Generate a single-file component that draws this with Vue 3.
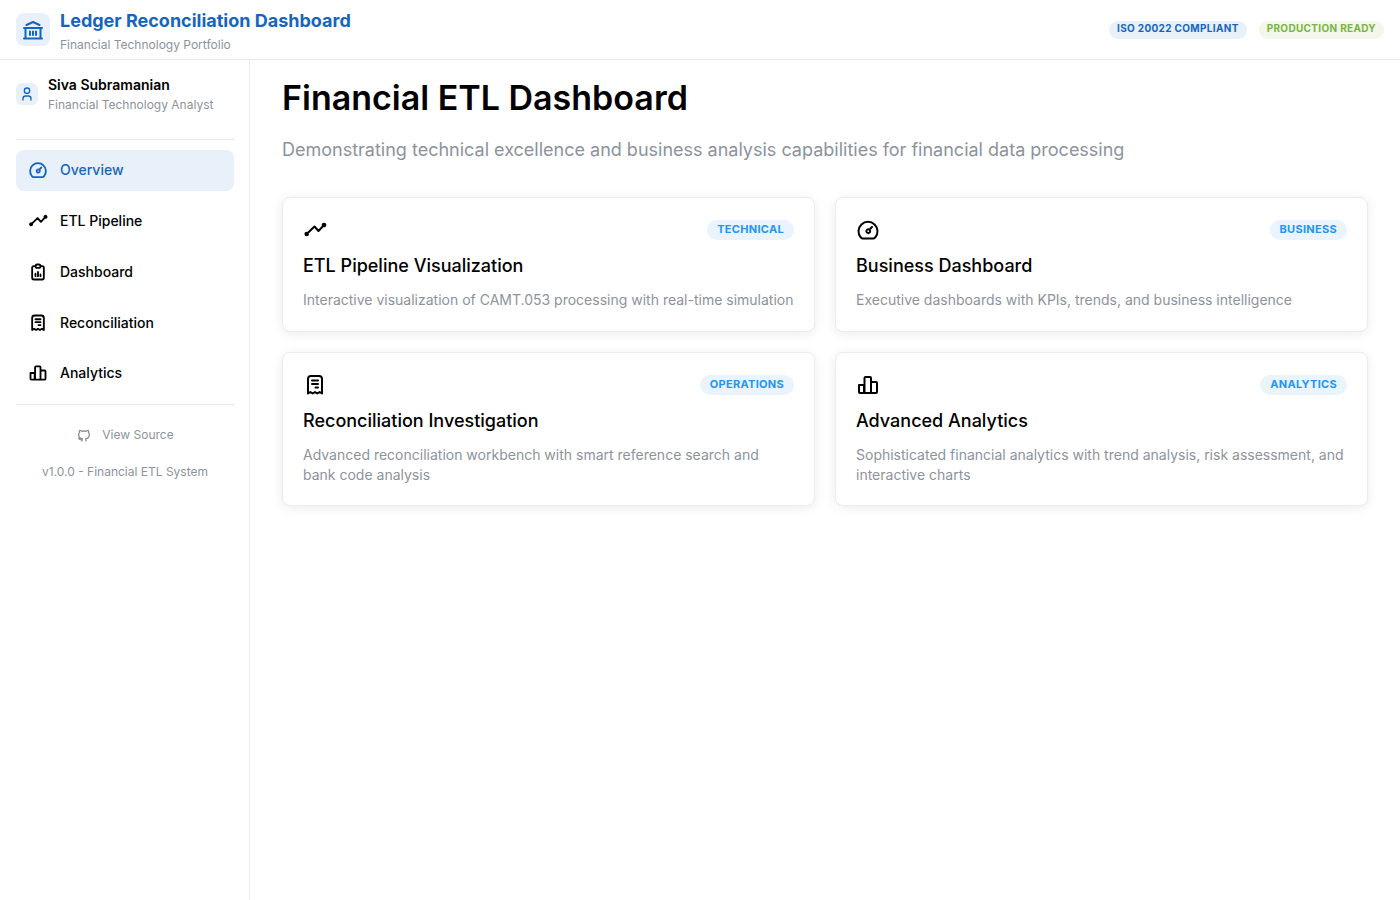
<template>
  <div class="app">
    <header class="topbar">
      <div class="brand">
        <div class="brand-icon">
          <svg width="24" height="24" viewBox="0 0 24 24" fill="none" stroke="currentColor" stroke-width="2" stroke-linecap="round" stroke-linejoin="round">
            <path d="M3 20.500h18M3 10h18M5.500 7l6.500-3 6.500 3M4.500 10v10.500M19.500 10v10.500M9 13.500v3.500M12 13.500v3.500M15 13.500v3.500" />
          </svg>
        </div>
        <div class="brand-text">
          <div class="brand-title">Ledger Reconciliation Dashboard</div>
          <div class="brand-sub">Financial Technology Portfolio</div>
        </div>
      </div>
      <div class="badges">
        <span class="pill pill-blue">ISO 20022 COMPLIANT</span>
        <span class="pill pill-green">PRODUCTION READY</span>
      </div>
    </header>

    <div class="body">
      <aside class="sidebar">
        <div class="profile">
          <div class="avatar">
            <svg width="16" height="16" viewBox="0 0 24 24" fill="none" stroke="currentColor" stroke-width="2" stroke-linecap="round" stroke-linejoin="round">
              <path d="M8 7a4 4 0 1 0 8 0a4 4 0 1 0-8 0M6 21v-2a4 4 0 0 1 4-4h4a4 4 0 0 1 4 4v2" />
            </svg>
          </div>
          <div>
            <div class="profile-name">Siva Subramanian</div>
            <div class="profile-role">Financial Technology Analyst</div>
          </div>
        </div>

        <nav class="nav">
          <a v-for="item in navItems" :key="item.label" class="nav-item" :class="{ active: item.active }">
            <svg class="nav-icon" width="20" height="20" viewBox="0 0 24 24" fill="none" stroke="currentColor" stroke-width="2.200" stroke-linecap="round" stroke-linejoin="round">
              <path :d="icons[item.icon]" />
            </svg>
            <span class="nav-label">{{ item.label }}</span>
          </a>
        </nav>

        <div class="side-foot">
          <a class="source">
            <svg width="16" height="16" viewBox="0 0 24 24" fill="none" stroke="currentColor" stroke-width="2" stroke-linecap="round" stroke-linejoin="round">
              <path d="M9 21c-.1-1 0-2 .5-3.500-2.800-.3-5.500-1.400-5.500-6a4.600 4.600 0 0 1 1.300-3.200 4.200 4.200 0 0 1 .1-3.200s1.100-.3 3.500 1.300a12.300 12.300 0 0 1 6.200 0c2.400-1.600 3.500-1.300 3.500-1.300a4.200 4.200 0 0 1 .1 3.200 4.600 4.600 0 0 1 1.300 3.200c0 4.600-2.700 5.700-5.500 6 .5 1.500.6 2.500.5 3.500M9 19c-3 .9-4-.5-5-2" />
            </svg>
            <span>View Source</span>
          </a>
          <div class="version">v1.0.0 - Financial ETL System</div>
        </div>
      </aside>

      <main class="main">
        <h1>Financial ETL Dashboard</h1>
        <p class="lead">Demonstrating technical excellence and business analysis capabilities for financial data processing</p>
        <div class="cards">
          <div v-for="card in cards" :key="card.title" class="card">
            <div class="card-top">
              <svg width="24" height="24" viewBox="0 0 24 24" fill="none" stroke="currentColor" stroke-width="2" stroke-linecap="round" stroke-linejoin="round">
                <path :d="icons[card.icon]" />
              </svg>
              <span class="tag">{{ card.tag }}</span>
            </div>
            <h2>{{ card.title }}</h2>
            <p>{{ card.text }}</p>
          </div>
        </div>
      </main>
    </div>
  </div>
</template>

<script setup>
const icons = {
  gauge: 'M6.500 20.500h11a2 2 0 0 0 1.700-1A9.500 9.500 0 1 0 4.800 19.500a2 2 0 0 0 1.700 1M10.700 14.300a1.900 1.900 0 1 0 2.700-2.600 1.900 1.900 0 0 0-2.700 2.600M13.500 11.500l2.500-2.500',
  line: 'M3.700 16L11.500 8.500l4 4.500L21 7M2.400 16a1.300 1.300 0 1 0 2.600 0a1.300 1.300 0 1 0-2.600 0M19.700 7a1.300 1.300 0 1 0 2.600 0a1.300 1.300 0 1 0-2.600 0',
  clip: 'M9 5H7a2 2 0 0 0-2 2v12a2 2 0 0 0 2 2h10a2 2 0 0 0 2-2V7a2 2 0 0 0-2-2h-2M9 5a2 2 0 0 1 2-2h2a2 2 0 0 1 2 2v0a2 2 0 0 1-2 2h-2a2 2 0 0 1-2-2M9 17v-3M12 17v-5M15 17v-2',
  receipt: 'M5 20.500V6a3 3 0 0 1 3-3h8a3 3 0 0 1 3 3v14.500l-2.330-1.500-2.330 1.500-2.340-1.500-2.340 1.500-2.330-1.500zM9 7.500h6M9 11h6M12.500 14.500H15',
  bars: 'M3 12h5v8H4a1 1 0 0 1-1-1zM8.500 20V5a1 1 0 0 1 1-1h4.500a1 1 0 0 1 1 1v15zM15 9h5a1 1 0 0 1 1 1v9a1 1 0 0 1-1 1h-5'
}

const navItems = [
  { label: 'Overview', icon: 'gauge', active: true },
  { label: 'ETL Pipeline', icon: 'line' },
  { label: 'Dashboard', icon: 'clip' },
  { label: 'Reconciliation', icon: 'receipt' },
  { label: 'Analytics', icon: 'bars' }
]

const cards = [
  {
    icon: 'line',
    tag: 'TECHNICAL',
    title: 'ETL Pipeline Visualization',
    text: 'Interactive visualization of CAMT.053 processing with real-time simulation'
  },
  {
    icon: 'gauge',
    tag: 'BUSINESS',
    title: 'Business Dashboard',
    text: 'Executive dashboards with KPIs, trends, and business intelligence'
  },
  {
    icon: 'receipt',
    tag: 'OPERATIONS',
    title: 'Reconciliation Investigation',
    text: 'Advanced reconciliation workbench with smart reference search and bank code analysis'
  },
  {
    icon: 'bars',
    tag: 'ANALYTICS',
    title: 'Advanced Analytics',
    text: 'Sophisticated financial analytics with trend analysis, risk assessment, and interactive charts'
  }
]
</script>

<style scoped>
.app {
  min-height: 900px;
  background: #fff;
  color: #000;
  font-family: Inter, "Liberation Sans", sans-serif;
}

.topbar {
  height: 60px;
  box-sizing: border-box;
  border-bottom: 1px solid #e5e7eb;
  padding: 0 16px;
  display: flex;
  align-items: center;
  justify-content: space-between;
}

.brand {
  display: flex;
  align-items: center;
  gap: 10px;
}

.brand-text {
  padding-top: 4px;
}

.brand-icon {
  width: 34px;
  height: 33px;
  border-radius: 8px;
  background: #e8f0f9;
  color: #1565c0;
  display: flex;
  align-items: center;
  justify-content: center;
}

.brand-title {
  font-size: 18px;
  font-weight: 700;
  line-height: 22px;
  color: #1565c0;
}

.brand-sub {
  margin-top: 5px;
  font-size: 12px;
  line-height: 16px;
  color: #8c939d;
}

.badges {
  display: flex;
  gap: 12px;
}

.pill {
  height: 18px;
  padding: 0 8px;
  border-radius: 9px;
  font-size: 10px;
  font-weight: 700;
  line-height: 15px;
  letter-spacing: 0.33px;
}

.pill-blue {
  background: #e8f0f9;
  color: #1565c0;
}

.pill-green {
  background: #f2f7ec;
  color: #7cb342;
}

.body {
  display: flex;
  height: 840px;
}

.sidebar {
  width: 250px;
  box-sizing: border-box;
  border-right: 1px solid #eceef1;
  padding: 0 15px 0 16px;
}

.profile {
  height: 80px;
  box-sizing: border-box;
  border-bottom: 1px solid #e5e7eb;
  display: flex;
  align-items: center;
  gap: 10px;
  padding-bottom: 10px;
}

.avatar {
  width: 22px;
  height: 22px;
  margin-top: -1px;
  border-radius: 6px;
  background: #e8f0f9;
  color: #1565c0;
  display: flex;
  align-items: center;
  justify-content: center;
}

.profile-name {
  font-size: 14px;
  font-weight: 600;
  line-height: 20px;
}

.profile-role {
  font-size: 12px;
  line-height: 20px;
  color: #8c939d;
}

.nav {
  margin-top: 10px;
  padding-bottom: 10.25px;
  border-bottom: 1px solid #e5e7eb;
  display: flex;
  flex-direction: column;
  gap: 10.25px;
}

.nav-item {
  height: 40.5px;
  padding: 0 12px;
  border-radius: 8px;
  display: flex;
  align-items: center;
  gap: 12px;
  font-size: 14px;
  font-weight: 500;
}

.nav-label {
  margin-top: -1px;
}

.nav-item.active {
  background: #e8f0f9;
  color: #1565c0;
}

.side-foot {
  padding-top: 22px;
  text-align: center;
  font-size: 12px;
  color: #8c939d;
}

.source {
  display: flex;
  justify-content: center;
  align-items: center;
  gap: 10px;
  line-height: 16px;
}

.version {
  margin-top: 21px;
  line-height: 16px;
}

.main {
  flex: 1;
  padding: 18px 32px 0;
}

h1 {
  margin: 0;
  font-size: 34px;
  font-weight: 600;
  line-height: 40px;
}

.lead {
  margin: 18px 0 0;
  font-size: 18px;
  line-height: 28px;
  color: #8c939d;
}

.cards {
  margin-top: 33px;
  display: grid;
  grid-template-columns: 1fr 1fr;
  gap: 20px;
}

.card {
  box-sizing: border-box;
  padding: 20px 20px 20.5px;
  border: 1px solid #eaecef;
  border-radius: 8px;
  box-shadow: 0 2px 12px rgba(0, 0, 0, 0.08);
  background: #fff;
}

.card-top {
  display: flex;
  align-items: center;
  justify-content: space-between;
  height: 24px;
}

.tag {
  height: 20px;
  padding: 0 10px;
  border-radius: 10px;
  background: #e9f4fe;
  color: #2196f3;
  font-size: 11px;
  font-weight: 700;
  line-height: 19px;
  letter-spacing: 0.3px;
}

h2 {
  margin: 11px 0 0;
  font-size: 18px;
  font-weight: 500;
  line-height: 26px;
}

.card p {
  margin: 11px 0 0;
  font-size: 14px;
  line-height: 20px;
  color: #8c939d;
}
</style>
